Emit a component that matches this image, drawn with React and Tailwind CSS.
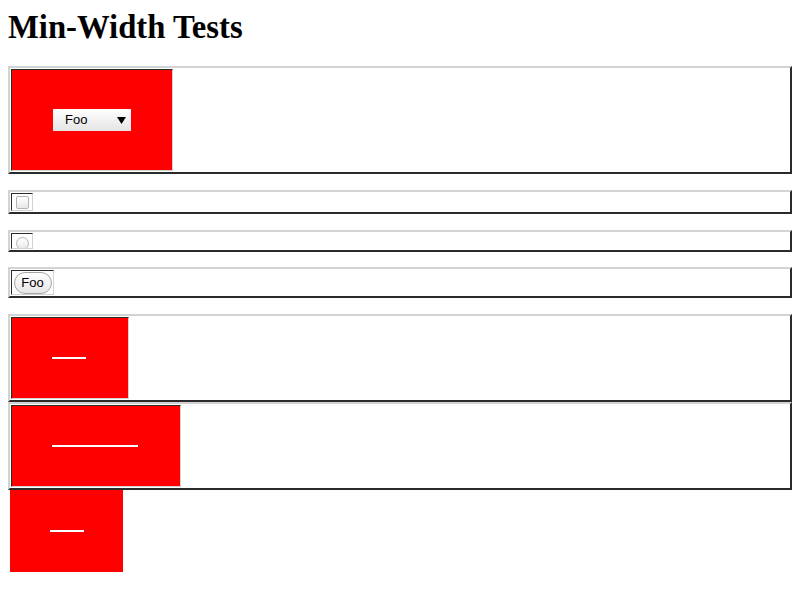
export default function App() {
  const outer =
    "flex w-full border-2 border-t-[#d3d3d3] border-l-[#d3d3d3] border-b-[#2b2b2b] border-r-[#2b2b2b] p-px";
  const cell =
    "border border-t-[#2b2b2b] border-l-[#2b2b2b] border-b-[#d3d3d3] border-r-[#d3d3d3]";

  return (
    <div className="min-h-screen bg-white px-2 pt-[9px] font-['Liberation_Serif',serif] text-black">
      <h1 className="mb-[20px] text-[32.7px] font-bold leading-[37px]">Min-Width Tests</h1>

      {/* select */}
      <div className={`${outer} mb-4`}>
        <div className={cell}>
          <div className="flex h-[100px] w-[160px] items-center justify-center bg-[#ff0000]">
            <div className="flex h-[22px] w-[78px] items-center justify-between bg-gradient-to-b from-white to-[#e4e4e4] pl-3 pr-[5px] font-['Liberation_Sans',sans-serif] text-[13px]">
              <span>Foo</span>
              <svg width="9" height="8" viewBox="0 0 9 8">
                <path d="M0 1h9L4.5 8z" fill="#000" />
              </svg>
            </div>
          </div>
        </div>
      </div>

      {/* checkbox */}
      <div className={`${outer} mb-4`}>
        <div className={cell}>
          <div className="flex h-[16px] w-[20px] items-center justify-center">
            <div className="h-[13px] w-[13px] rounded-[2px] border border-[#b4b4b4] bg-gradient-to-b from-white to-[#e8e8e8]" />
          </div>
        </div>
      </div>

      {/* radio */}
      <div className={`${outer} mb-[15px]`}>
        <div className={cell}>
          <div className="flex h-[14px] w-[20px] items-end justify-center overflow-hidden">
            <div className="mb-[-2px] h-[13px] w-[13px] rounded-full border border-[#b4b4b4] bg-gradient-to-b from-white to-[#e8e8e8]" />
          </div>
        </div>
      </div>

      {/* button */}
      <div className={`${outer} mb-4`}>
        <div className={cell}>
          <div className="flex h-[23px] w-[41px] items-center justify-center">
            <div className="flex h-[22px] w-[38px] items-center justify-center rounded-full border border-[#a6a6a6] bg-gradient-to-b from-white to-[#e6e6e6] font-['Liberation_Sans',sans-serif] text-[13px]">
              Foo
            </div>
          </div>
        </div>
      </div>

      {/* rule inside table */}
      <div className={outer}>
        <div className={cell}>
          <div className="h-[80px] w-[116px] bg-[#ff0000] pl-[40px] pt-[39px]">
            <div className="h-[2px] w-[34px] bg-white" />
          </div>
        </div>
      </div>

      <div className={outer}>
        <div className={cell}>
          <div className="h-[80px] w-[168px] bg-[#ff0000] pl-[40px] pt-[39px]">
            <div className="h-[2px] w-[86px] bg-white" />
          </div>
        </div>
      </div>

      {/* bare block */}
      <div className="ml-[2px] h-[82px] w-[113px] bg-[#ff0000] pl-[40px] pt-[40px]">
        <div className="h-[2px] w-[34px] bg-white" />
      </div>
    </div>
  );
}
